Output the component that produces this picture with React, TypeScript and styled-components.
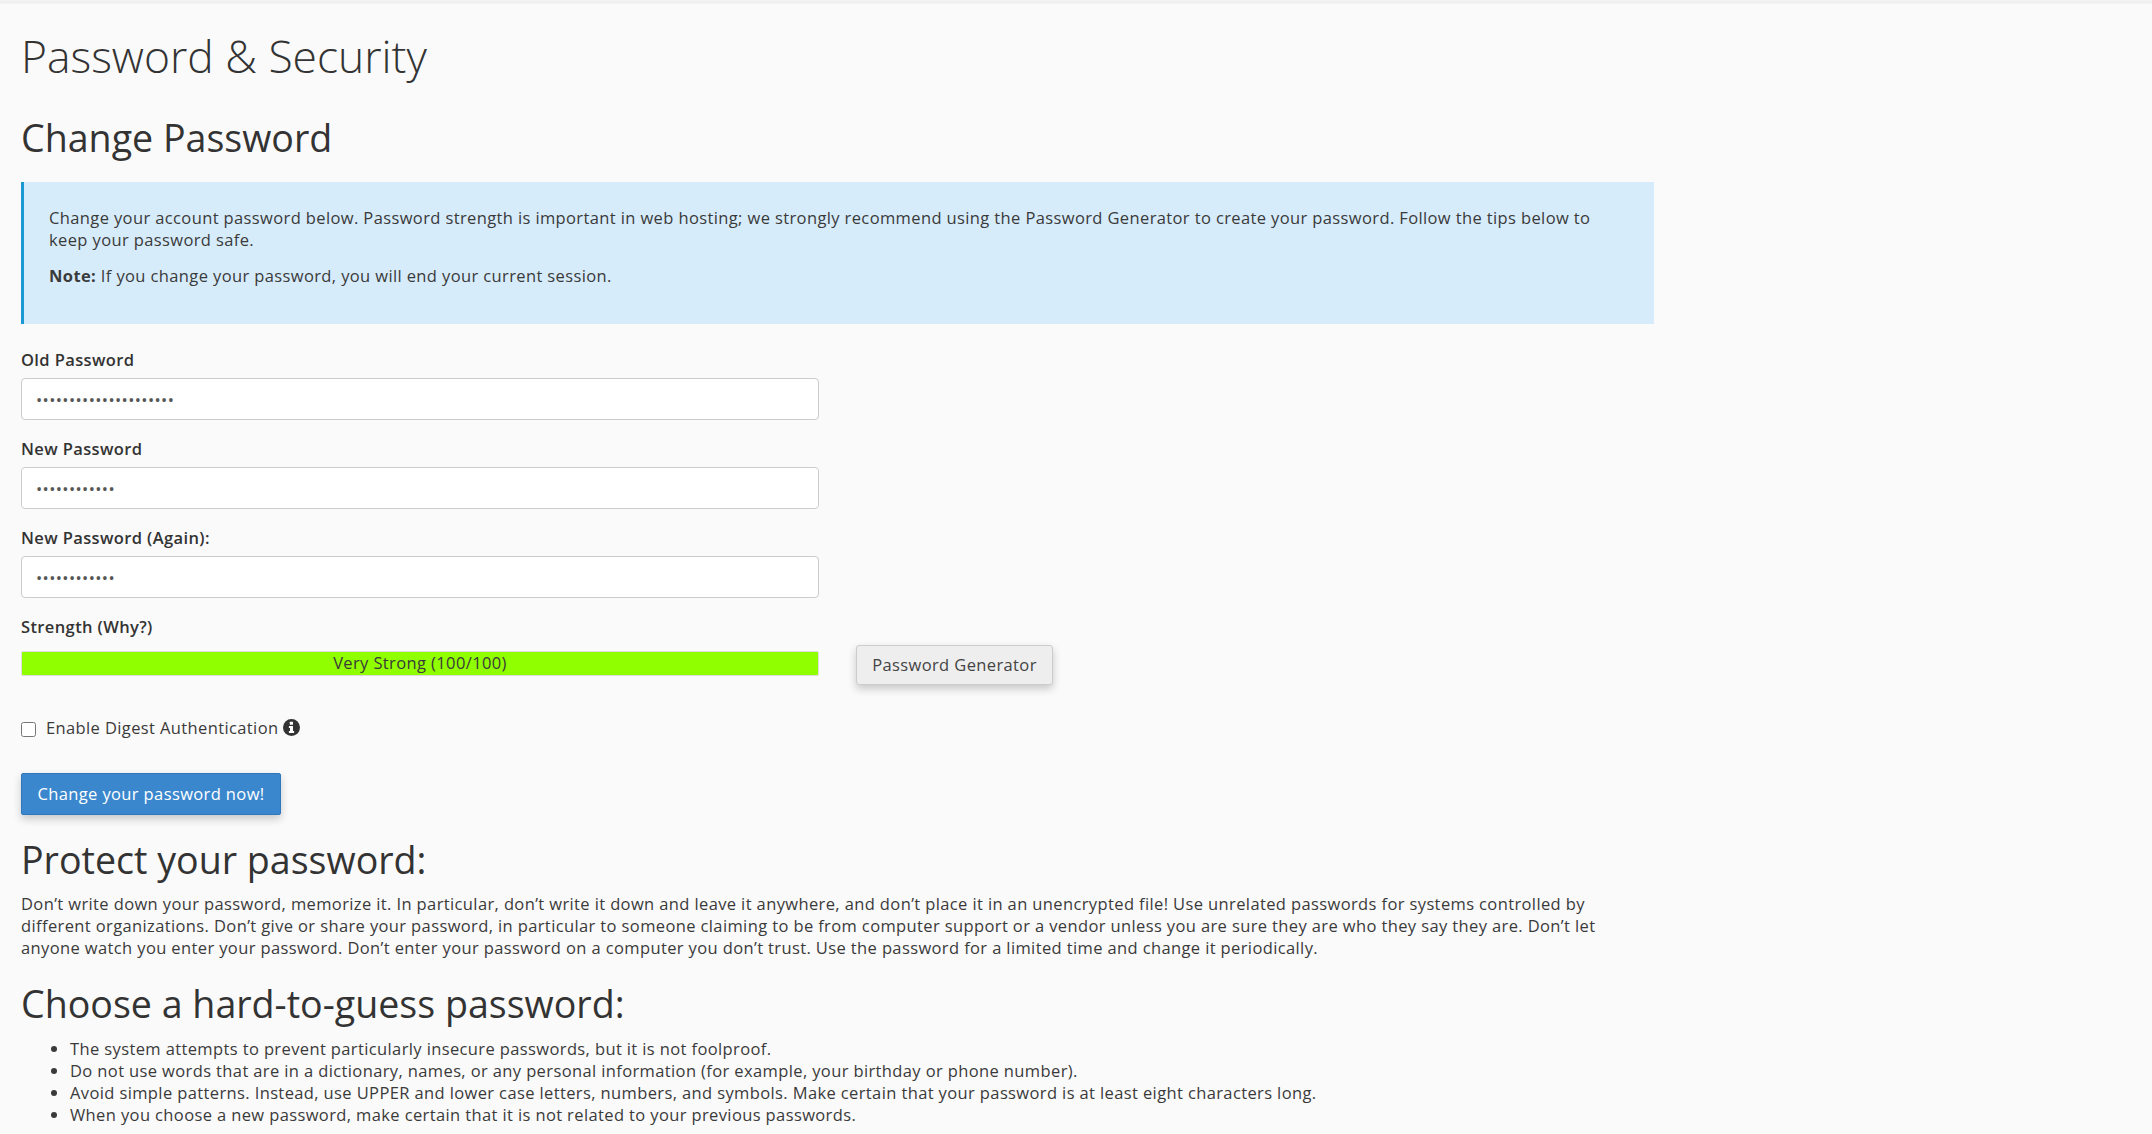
import React from "react";
import styled, { createGlobalStyle } from "styled-components";

const Global = createGlobalStyle`
  html, body { margin: 0; padding: 0; background: #fafafa; overflow: hidden; }
  body { font-family: "Open Sans", "Liberation Sans", sans-serif; color: #3a3a3a; font-size: 16.5px; letter-spacing: 0.38px; line-height: 22px; }
  * { box-sizing: border-box; }
`;

const Page = styled.div`
  height: 1134px;
  overflow: hidden;
`;

const TopShadow = styled.div`
  height: 2px;
  background: #f2f2f2;
  box-shadow: 0 1px 2px rgba(0, 0, 0, 0.08);
`;

const Content = styled.main`
  padding: 0 21px;
`;

const PageTitle = styled.h1`
  margin: 23px 0 0;
  font-size: 44.4px;
  letter-spacing: 0;
  line-height: 62px;
  font-weight: 300;
  color: #333;
`;

const SectionTitle = styled.h2<{ $top: number }>`
  margin: ${(p) => p.$top}px 0 0;
  font-size: 37.6px;
  letter-spacing: 0;
  line-height: 48px;
  font-weight: 500;
  color: #333;
`;

const InfoBox = styled.div`
  width: 1633px;
  height: 142px;
  margin-top: 20px;
  padding: 25px 56px 0 25px;
  background: #d7ecfa;
  border-left: 3px solid #1a99d5;
`;

const Para = styled.p`
  margin: 0 0 14px;
`;

const Form = styled.form`
  padding-top: 7px;
`;

const Field = styled.div`
  width: 798px;
  margin-top: 18px;
`;

const Label = styled.label`
  display: block;
  font-weight: 600;
  color: #333;
  line-height: 22px;
  margin-bottom: 7px;
`;

const Input = styled.input`
  display: block;
  width: 100%;
  height: 42px;
  padding: 0 14px;
  border: 1px solid #ccc;
  border-radius: 4px;
  background: #fff;
  color: #555;
  font: inherit;
  letter-spacing: inherit;
  outline: none;
`;

const MeterRow = styled.div`
  display: flex;
  align-items: flex-start;
  gap: 37px;
  margin-top: 13px;
`;

const Meter = styled.div`
  width: 798px;
  height: 25px;
  background: #90ff00;
  border: 1px solid #ddd;
  border-radius: 2px;
  text-align: center;
  line-height: 22px;
`;

const GeneratorButton = styled.button`
  height: 40px;
  width: 197px;
  margin-top: -6px;
  margin-bottom: 1px;
  padding: 0;
  border: 1px solid #ccc;
  border-radius: 3px;
  background: #eee;
  color: #444;
  font: inherit;
  letter-spacing: inherit;
  box-shadow: 0 4px 8px rgba(0, 0, 0, 0.2);
`;

const CheckRow = styled.div`
  display: flex;
  align-items: center;
  margin-top: 31px;
  height: 22px;
`;

const Check = styled.input`
  width: 15px;
  height: 15px;
  margin: 2px 10px 0 0;
`;

const InfoIcon = styled.svg`
  width: 17px;
  height: 17px;
  margin-left: 5px;
  margin-bottom: 1px;
`;

const PrimaryButton = styled.button`
  display: block;
  width: 260px;
  height: 42px;
  margin-top: 34px;
  padding: 0;
  border: 1px solid #2f78bb;
  border-radius: 2px;
  background: #3a87cd;
  color: #fff;
  font: inherit;
  letter-spacing: inherit;
  box-shadow: 0 4px 8px rgba(0, 0, 0, 0.2);
`;

const Body = styled.p`
  width: 1610px;
  margin: 9px 0 0;
`;

const TipList = styled.ul`
  margin: 10px 0 0;
  padding-left: 49px;
`;

const Tip = styled.li``;

const fields = [
  { label: "Old Password", value: "abcdefghijklmnopqrstu" },
  { label: "New Password", value: "abcdefghijkl" },
  { label: "New Password (Again):", value: "abcdefghijkl" },
];

const tips = [
  "The system attempts to prevent particularly insecure passwords, but it is not foolproof.",
  "Do not use words that are in a dictionary, names, or any personal information (for example, your birthday or phone number).",
  "Avoid simple patterns. Instead, use UPPER and lower case letters, numbers, and symbols. Make certain that your password is at least eight characters long.",
  "When you choose a new password, make certain that it is not related to your previous passwords.",
];

export default function App() {
  return (
    <Page>
      <Global />
      <TopShadow />
      <Content>
        <PageTitle>Password &amp; Security</PageTitle>
        <SectionTitle $top={27}>Change Password</SectionTitle>
        <InfoBox>
          <Para>
            Change your account password below. Password strength is important in web hosting; we strongly recommend using the Password Generator to create your password. Follow the tips below to keep your password safe.
          </Para>
          <Para>
            <strong>Note:</strong> If you change your password, you will end your current session.
          </Para>
        </InfoBox>
        <Form>
          {fields.map((f) => (
            <Field key={f.label}>
              <Label>{f.label}</Label>
              <Input type="password" defaultValue={f.value} readOnly />
            </Field>
          ))}
          <Field>
            <Label>Strength (Why?)</Label>
          </Field>
          <MeterRow>
            <Meter>Very Strong (100/100)</Meter>
            <GeneratorButton type="button">Password Generator</GeneratorButton>
          </MeterRow>
          <CheckRow>
            <Check type="checkbox" />
            <span>Enable Digest Authentication</span>
            <InfoIcon viewBox="0 0 17 17" aria-hidden="true">
              <circle cx="8.5" cy="8.5" r="8.5" fill="#333" />
              <rect x="6.8" y="2.8" width="3.2" height="2.9" rx="0.5" fill="#fff" />
              <path d="M5.9 7h4.1v5h1.1v2H5.9v-2H7V9H5.9z" fill="#fff" />
            </InfoIcon>
          </CheckRow>
          <PrimaryButton type="button">Change your password now!</PrimaryButton>
        </Form>
        <SectionTitle $top={21}>Protect your password:</SectionTitle>
        <Body>
          Don’t write down your password, memorize it. In particular, don’t write it down and leave it anywhere, and don’t place it in an unencrypted file! Use unrelated passwords for systems controlled by different organizations. Don’t give or share your password, in particular to someone claiming to be from computer support or a vendor unless you are sure they are who they say they are. Don’t let anyone watch you enter your password. Don’t enter your password on a computer you don’t trust. Use the password for a limited time and change it periodically.
        </Body>
        <SectionTitle $top={21}>Choose a hard-to-guess password:</SectionTitle>
        <TipList>
          {tips.map((t) => (
            <Tip key={t}>{t}</Tip>
          ))}
        </TipList>
      </Content>
    </Page>
  );
}
